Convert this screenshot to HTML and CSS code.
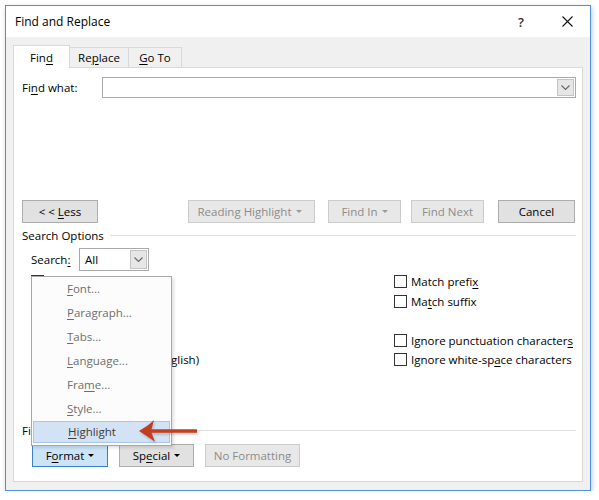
FILE: index.html
```html
<!DOCTYPE html>
<html>
<head>
<meta charset="utf-8">
<title>Find and Replace</title>
<link rel="stylesheet" href="styles.css">
</head>
<body>
<div class="window">
  <div class="titlebar">
    <span class="title">Find and Replace</span>
    <span class="cap-btn help">?</span>
    <span class="cap-btn close">
      <svg width="11" height="11" viewBox="0 0 11 11"><path d="M0.5 0.5 L10.5 10.5 M10.5 0.5 L0.5 10.5" stroke="#111" stroke-width="1.1" fill="none"/></svg>
    </span>
  </div>
  <div class="body">
    <div class="tabs">
      <div class="tab tab-find active">Fin<u>d</u></div>
      <div class="tab tab-replace">Re<u>p</u>lace</div>
      <div class="tab tab-goto"><u>G</u>o To</div>
    </div>
    <div class="panel">
      <div class="find-row">
        <span class="find-label">Fi<u>n</u>d what:</span>
        <div class="combo combo-wide">
          <div class="combo-field"></div>
          <div class="combo-btn"><svg width="9" height="5" viewBox="0 0 9 5"><path d="M0.5 0.5 L4.5 4.5 L8.5 0.5" stroke="#666" stroke-width="1.1" fill="none"/></svg></div>
        </div>
      </div>

      <div class="btn-row">
        <div class="btn btn-less"><span>&lt; &lt; <u>L</u>ess</span></div>
        <div class="btn disabled btn-reading"><span>Reading Highlight</span><span class="caret"></span></div>
        <div class="btn disabled btn-findin"><span>Find In</span><span class="caret"></span></div>
        <div class="btn disabled btn-next">Find Next</div>
        <div class="btn btn-cancel">Cancel</div>
      </div>

      <div class="group-head">
        <span>Search Options</span>
        <div class="rule"></div>
      </div>

      <div class="search-row">
        <span class="search-label">Search<u>:</u></span>
        <div class="combo combo-small">
          <div class="combo-field">All</div>
          <div class="combo-btn"><svg width="9" height="5" viewBox="0 0 9 5"><path d="M0.5 0.5 L4.5 4.5 L8.5 0.5" stroke="#666" stroke-width="1.1" fill="none"/></svg></div>
        </div>
      </div>

      <div class="options">
        <div class="opt"><span class="cb"></span></div>
        <div class="opt"><span class="cb"></span>Match prefi<u>x</u></div>
        <div class="opt"><span class="cb"></span></div>
        <div class="opt"><span class="cb"></span>Ma<u>t</u>ch suffix</div>
        <div class="opt"><span class="cb"></span></div>
        <div class="opt"></div>
        <div class="opt"><span class="cb"></span></div>
        <div class="opt"><span class="cb"></span>Ignore punctuation character<u>s</u></div>
        <div class="opt"><span class="cb"></span>Find all word forms (English)</div>
        <div class="opt"><span class="cb"></span>Ignore white-sp<u>a</u>ce characters</div>
      </div>

      <div class="group-head find-head">
        <span>Find</span>
        <div class="rule"></div>
      </div>

      <div class="fmt-row">
        <div class="btn btn-format"><span>F<u>o</u>rmat</span><span class="caret"></span></div>
        <div class="btn btn-special"><span>Sp<u>e</u>cial</span><span class="caret"></span></div>
        <div class="btn disabled btn-noformat">No Formatting</div>
      </div>

      <div class="menu">
        <div class="menu-item"><u>F</u>ont...</div>
        <div class="menu-item"><u>P</u>aragraph...</div>
        <div class="menu-item"><u>T</u>abs...</div>
        <div class="menu-item"><u>L</u>anguage...</div>
        <div class="menu-item">Fra<u>m</u>e...</div>
        <div class="menu-item"><u>S</u>tyle...</div>
        <div class="menu-item hot"><u>H</u>ighlight</div>
      </div>

      <svg class="arrow" width="62" height="28" viewBox="0 0 62 28">
        <path d="M1 13 C6 10 12 6 16 2 L13.5 11.2 L59 11.2 L59 14.8 L13.5 14.8 L17 24 C12 20 6 16 1 13 Z" fill="#c23e1f"/>
      </svg>
    </div>
  </div>
</div>
</body>
</html>
```

FILE: styles.css
```css
* { box-sizing: border-box; }

body {
  margin: 0;
  background: #ffffff;
  font-family: "Open Sans", "Noto Sans", sans-serif;
  font-size: 11.5px;
  color: #000;
}

u { text-underline-offset: 2px; text-decoration-thickness: 1px; }

.window {
  margin: 5px 0 0 5px;
  width: 586px;
  border: 1px solid #4a93dc;
  background: #f0f0f0;
  box-shadow: 1px 2px 5px rgba(0, 0, 0, 0.22);
}

.titlebar {
  height: 31px;
  background: #fff;
  display: flex;
  align-items: center;
  padding-left: 9px;
}

.title { flex: 1; font-size: 12px; }

.cap-btn {
  width: 46px;
  height: 31px;
  display: flex;
  align-items: center;
  justify-content: center;
}

.help { font-size: 13px; font-weight: 600; color: #333; }

.body { padding: 8px 7px 8px 7px; }

.tabs {
  display: flex;
  align-items: flex-end;
  height: 23px;
  margin-bottom: -1px;
  position: relative;
  z-index: 1;
}

.tab {
  height: 21px;
  border: 1px solid #d9d9d9;
  border-left: none;
  background: #f0f0f0;
  display: flex;
  align-items: center;
  justify-content: center;
}

.tab.active {
  height: 23px;
  border-left: 1px solid #d9d9d9;
  border-bottom: none;
  background: #fff;
  padding-top: 1px;
}

.tab-find { width: 57px; }
.tab-replace { width: 59px; }
.tab-goto { width: 53px; }

.panel {
  position: relative;
  width: 570px;
  height: 415px;
  background: #fff;
  border: 1px solid #d9d9d9;
  display: flex;
  flex-direction: column;
}

.find-row {
  display: flex;
  align-items: center;
  height: 21px;
  margin: 9px 6px 0 8px;
}

.find-label { width: 80px; }

.combo {
  display: flex;
  height: 21px;
  border: 1px solid #a9a9a9;
  background: #fff;
}

.combo-wide { flex: 1; }

.combo-field {
  flex: 1;
  display: flex;
  align-items: center;
  padding-left: 5px;
}

.combo-btn {
  width: 17px;
  margin: 1px;
  background: #e6e6e6;
  border: 1px solid #c4c4c4;
  display: flex;
  align-items: center;
  justify-content: center;
}

.btn-row {
  display: flex;
  height: 23px;
  margin: 102px 0 0 8px;
}

.btn {
  height: 23px;
  border: 1px solid #adadad;
  background: #e1e1e1;
  display: flex;
  align-items: center;
  justify-content: center;
  white-space: pre;
}

.btn.disabled {
  color: #8c8c8c;
  border-color: #cccccc;
  background: #e8e8e8;
}

.caret {
  display: inline-block;
  width: 0;
  height: 0;
  margin-left: 4px;
  border-left: 3px solid transparent;
  border-right: 3px solid transparent;
  border-top: 3px solid currentColor;
}

.btn.disabled .caret { border-top-color: #9a9a9a; }

.btn-less { width: 76px; }
.btn-reading { width: 127px; margin-left: 90px; padding-right: 4px; }
.btn-findin { width: 73px; margin-left: 13px; }
.btn-next { width: 73px; margin-left: 10px; }
.btn-cancel { width: 77px; margin-left: 14px; }

.group-head {
  display: flex;
  align-items: center;
  height: 14px;
  margin: 5px 6px 0 8px;
}

.rule {
  flex: 1;
  height: 1px;
  background: #dedede;
  margin-left: 6px;
}

.search-row {
  display: flex;
  align-items: center;
  height: 23px;
  margin: 6px 0 0 17px;
}

.search-label { width: 48px; }

.combo-small { width: 70px; height: 23px; }

.options {
  display: grid;
  grid-template-columns: 363px 1fr;
  grid-auto-rows: 19.5px;
  margin-top: 1px;
  padding-left: 17px;
}

.opt {
  display: flex;
  align-items: center;
  white-space: nowrap;
}

.cb {
  width: 13px;
  height: 13px;
  border: 1px solid #333;
  background: #fff;
  margin-right: 4px;
  flex: none;
}

.find-head { margin-top: 54px; }

.fmt-row {
  display: flex;
  height: 23px;
  margin: 6px 0 0 18px;
}

.btn-format {
  width: 76px;
  background: #cce4f7;
  border-color: #3b7fc4;
}

.btn-special { width: 75px; margin-left: 11px; }
.btn-noformat { width: 95px; margin-left: 11px; }

.menu {
  position: absolute;
  left: 17px;
  top: 208px;
  width: 141px;
  height: 170px;
  background: #fcfcfc;
  border: 1px solid #a8a8a8;
  box-shadow: 2px 2px 3px rgba(0, 0, 0, 0.12);
  z-index: 2;
}

.menu-item {
  height: 24px;
  display: flex;
  align-items: center;
  padding-left: 35px;
  padding-bottom: 2px;
  color: #6e6e6e;
}

.menu-item.hot {
  margin: 0 1px;
  height: 22px;
  padding-left: 34px;
  padding-bottom: 1px;
  background: #d3e2f4;
  border: 1px solid #a9c7ec;
  color: #3c3c3c;
}

.arrow {
  position: absolute;
  left: 124px;
  top: 350px;
  z-index: 3;
  filter: drop-shadow(1px 2px 1px rgba(0, 0, 0, 0.18));
}
```
